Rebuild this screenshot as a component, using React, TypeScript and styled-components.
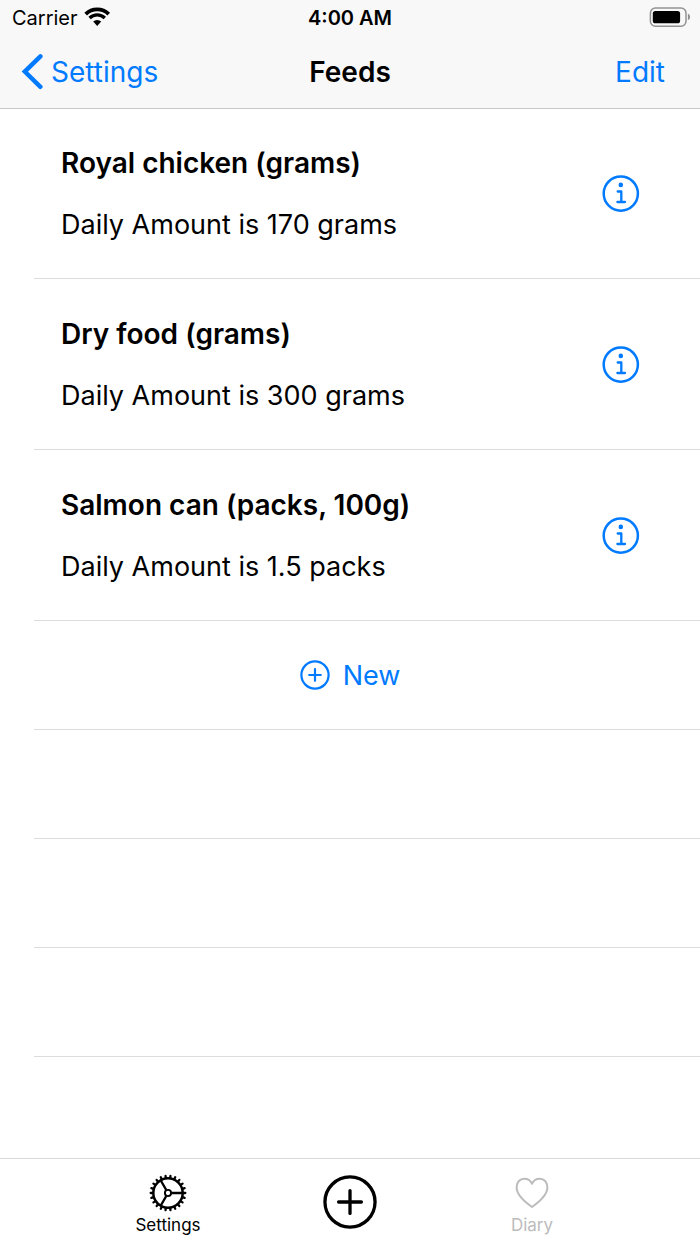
import React from "react";
import styled, { createGlobalStyle } from "styled-components";

const BLUE = "#007aff";

const GlobalStyle = createGlobalStyle`
  * { box-sizing: border-box; }
  body {
    margin: 0;
    background: #fff;
    color: #000;
    font-family: Inter, "Liberation Sans", sans-serif;
  }
  svg { display: block; flex: none; }
`;

const Screen = styled.div`
  display: flex;
  flex-direction: column;
  min-height: 100vh;
`;

const Header = styled.header`
  background: #f8f8f8;
  box-shadow: 0 1px 0 #c8c8c8;
`;

const StatusBar = styled.div`
  display: grid;
  grid-template-columns: 1fr auto 1fr;
  align-items: center;
  height: 36px;
  padding: 0 10px;
  font-size: 20px;
`;

const Carrier = styled.div`
  display: flex;
  align-items: center;
  gap: 6px;
  padding-left: 2px;
`;

const Clock = styled.time`
  font-weight: 600;
`;

const BatterySlot = styled.div`
  display: flex;
  justify-content: flex-end;
`;

const NavBar = styled.nav`
  display: grid;
  grid-template-columns: 1fr auto 1fr;
  align-items: center;
  height: 72px;
  padding: 0 21px;
`;

const Title = styled.h1`
  margin: 0;
  font-size: 28px;
  font-weight: 600;
`;

const BackLink = styled.a`
  display: flex;
  align-items: center;
  gap: 8px;
  color: ${BLUE};
  font-size: 28px;
  text-decoration: none;
`;

const PlainButton = styled.button`
  display: flex;
  align-items: center;
  justify-content: center;
  padding: 0;
  border: 0;
  background: none;
  color: inherit;
  font: inherit;
  cursor: pointer;
`;

const EditButton = styled(PlainButton)`
  justify-self: end;
  padding-right: 14px;
  color: ${BLUE};
  font-size: 28px;
`;

const List = styled.ul`
  flex: 1;
  margin: 0;
  padding: 0 0 0 34px;
  list-style: none;
`;

const Row = styled.li`
  display: flex;
  align-items: center;
  min-height: 109px;
  border-bottom: 1px solid #dcdcdd;
`;

const FeedRow = styled(Row)`
  justify-content: space-between;
  padding: 38px 60px 36px 27px;
`;

const FeedText = styled.div`
  display: grid;
  gap: 28px;
  line-height: 34px;
`;

const FeedName = styled.h2`
  margin: 0;
  font-size: 28px;
  font-weight: 600;
`;

const FeedAmount = styled.p`
  margin: 0;
  font-size: 27px;
`;

const InfoButton = styled(PlainButton)`
  color: ${BLUE};
`;

const NewRow = styled(Row)`
  justify-content: center;
  padding-right: 34px;
`;

const NewButton = styled(PlainButton)`
  gap: 13px;
  color: ${BLUE};
  font-size: 27px;
`;

const TabBar = styled.footer`
  display: grid;
  grid-template-columns: repeat(3, 26%);
  justify-content: center;
  align-items: center;
  height: 86px;
  border-top: 1px solid #d9d9d9;
`;

const Tab = styled.a<{ $muted?: boolean }>`
  display: flex;
  flex-direction: column;
  align-items: center;
  color: ${(p) => (p.$muted ? "#bcbcbc" : "#000")};
  text-decoration: none;
`;

const LabelledTab = styled(Tab)`
  gap: 3px;
  padding-top: 5px;
  font-size: 17px;
  line-height: 20px;
`;

const WifiIcon = () => (
  <svg width="27" height="22" viewBox="0 0 27 22" fill="none" stroke="currentColor" aria-hidden="true">
    <path d="M1.7 7.1A16.3 16.3 0 0 1 24.7 7.1" strokeWidth="3.8" />
    <path d="M5.6 11A10.8 10.8 0 0 1 20.8 11" strokeWidth="3.3" />
    <path d="M13.2 18.9L9.2 14.600A5.700 5.700 0 0 1 17.200 14.600Z" fill="currentColor" stroke="none" />
  </svg>
);

const BatteryIcon = () => (
  <svg width="41" height="22" viewBox="0 0 41 22" role="img" aria-label="Battery">
    <rect x="1.4" y="1" width="35.6" height="18.2" rx="5" fill="none" stroke="#929292" strokeWidth="1.5" />
    <rect x="3.8" y="3.9" width="27.3" height="12.4" rx="2.6" fill="#000" />
    <path d="M38.9 6.800c3 1 3 5.400 0 6.400z" fill="#929292" />
  </svg>
);

const ChevronIcon = () => (
  <svg width="22" height="36" viewBox="0 0 22 36" fill="none" stroke="currentColor" strokeWidth="4.4" strokeLinecap="round" aria-hidden="true">
    <path d="M19.4 2.4L3.8 17.6L19.4 32.8" strokeLinejoin="miter" />
  </svg>
);

const InfoIcon = () => (
  <svg width="38" height="38" viewBox="0 0 38 38" fill="none" stroke="currentColor" aria-hidden="true">
    <circle cx="18.8" cy="18.6" r="17.1" strokeWidth="2.5" />
    <circle cx="18.8" cy="9.9" r="2.3" fill="currentColor" stroke="none" />
    <path d="M15.700 16.500H19.300V27M15.400 27H23" strokeWidth="2.3" strokeLinecap="round" strokeLinejoin="round" />
  </svg>
);

const PlusCircleIcon = ({ size, stroke, arm }: { size: number; stroke: number; arm: number }) => {
  const c = size / 2;
  return (
    <svg width={size} height={size} viewBox={`0 0 ${size} ${size}`} fill="none" stroke="currentColor" strokeWidth={stroke} strokeLinecap="round" aria-hidden="true">
      <circle cx={c} cy={c} r={c - stroke / 2 - 0.3} />
      <path d={`M${c - arm} ${c}h${arm * 2}M${c} ${c - arm}v${arm * 2}`} />
    </svg>
  );
};

const TOOTH_COUNT = 22;
const TEETH = Array.from({ length: TOOTH_COUNT }, (_, i) => (i * 360) / TOOTH_COUNT);

const GearIcon = () => (
  <svg width="38" height="38" viewBox="-19 -19 38 38" fill="none" stroke="currentColor" strokeWidth="2.3" aria-hidden="true">
    <circle r="14.7" strokeWidth="2.5" />
    <circle r="3.1" strokeWidth="1.9" />
    <path d="M3.6 0H15M-1.8 -3.1L-7.5 -13M-1.8 3.1L-7.5 13" />
    {TEETH.map((a) => (
      <path key={a} d="M15 0H17.3" transform={`rotate(${a})`} strokeLinecap="round" />
    ))}
  </svg>
);

const HeartIcon = () => (
  <svg width="34" height="38" viewBox="0 0 34 38" fill="none" stroke="currentColor" strokeWidth="2" strokeLinejoin="round" aria-hidden="true">
    <path d="M17 33C12 29.500 1.600 22 1.600 13.300C1.600 8.100 5 4.700 9.300 4.700C12.900 4.700 15.700 6.800 17 9.800C18.300 6.800 21.100 4.700 24.700 4.700C29 4.700 32.400 8.100 32.400 13.300C32.400 22 22 29.500 17 33Z" />
  </svg>
);

const feeds = [
  { name: "Royal chicken (grams)", amount: "170 grams" },
  { name: "Dry food (grams)", amount: "300 grams" },
  { name: "Salmon can (packs, 100g)", amount: "1.5 packs" },
];

export default function App() {
  return (
    <Screen>
      <GlobalStyle />
      <Header>
        <StatusBar>
          <Carrier>
            Carrier
            <WifiIcon />
          </Carrier>
          <Clock>4:00 AM</Clock>
          <BatterySlot>
            <BatteryIcon />
          </BatterySlot>
        </StatusBar>
        <NavBar>
          <BackLink href="#settings">
            <ChevronIcon />
            Settings
          </BackLink>
          <Title>Feeds</Title>
          <EditButton type="button">Edit</EditButton>
        </NavBar>
      </Header>
      <List>
        {feeds.map((feed) => (
          <FeedRow key={feed.name}>
            <FeedText>
              <FeedName>{feed.name}</FeedName>
              <FeedAmount>Daily Amount is {feed.amount}</FeedAmount>
            </FeedText>
            <InfoButton type="button" aria-label={`Details of ${feed.name}`}>
              <InfoIcon />
            </InfoButton>
          </FeedRow>
        ))}
        <NewRow>
          <NewButton type="button">
            <PlusCircleIcon size={30} stroke={2.2} arm={5.8} />
            New
          </NewButton>
        </NewRow>
        <Row aria-hidden="true" />
        <Row aria-hidden="true" />
        <Row aria-hidden="true" />
      </List>
      <TabBar>
        <LabelledTab href="#settings">
          <GearIcon />
          Settings
        </LabelledTab>
        <Tab href="#add" aria-label="Add">
          <PlusCircleIcon size={54} stroke={3.3} arm={11.4} />
        </Tab>
        <LabelledTab href="#diary" $muted>
          <HeartIcon />
          Diary
        </LabelledTab>
      </TabBar>
    </Screen>
  );
}
